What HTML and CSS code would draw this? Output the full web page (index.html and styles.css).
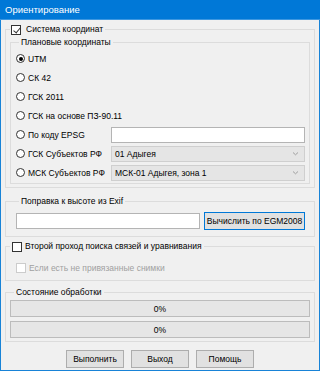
FILE: index.html
```html
<!DOCTYPE html>
<html lang="ru">
<head>
<meta charset="utf-8">
<link rel="stylesheet" href="styles.css">
</head>
<body>
<div class="window">
  <div class="titlebar">Ориентирование</div>
  <div class="content">
    <fieldset class="group g-coords">
      <legend class="legend"><span class="check checked"></span><span>Система координат</span></legend>
      <fieldset class="group g-plan">
        <legend class="legend">Плановые координаты</legend>
        <div class="radios">
          <div class="row"><span class="radio on"></span><span>UTM</span></div>
          <div class="row"><span class="radio"></span><span>СК 42</span></div>
          <div class="row"><span class="radio"></span><span>ГСК 2011</span></div>
          <div class="row"><span class="radio"></span><span>ГСК на основе ПЗ-90.11</span></div>
          <div class="row"><div class="lab"><span class="radio"></span><span>По коду EPSG</span></div><div class="input"></div></div>
          <div class="row"><div class="lab"><span class="radio"></span><span>ГСК Субъектов РФ</span></div><div class="combo"><span>01 Адыгея</span><svg width="7" height="5" viewBox="0 0 7 5"><path d="M1 1.5 L3.5 3.8 L6 1.5" fill="none" stroke="#a0a0a0" stroke-width="1"/></svg></div></div>
          <div class="row"><div class="lab"><span class="radio"></span><span>МСК Субъектов РФ</span></div><div class="combo"><span>МСК-01 Адыгея, зона 1</span><svg width="7" height="5" viewBox="0 0 7 5"><path d="M1 1.5 L3.5 3.8 L6 1.5" fill="none" stroke="#a0a0a0" stroke-width="1"/></svg></div></div>
        </div>
      </fieldset>
    </fieldset>

    <fieldset class="group g-exif">
      <legend class="legend">Поправка к высоте из Exif</legend>
      <div class="exif-row">
        <div class="input exif-input"></div>
        <div class="button default">Вычислить по EGM2008</div>
      </div>
    </fieldset>

    <fieldset class="group g-second">
      <legend class="legend"><span class="check"></span><span>Второй проход поиска связей и уравнивания</span></legend>
      <div class="row disabled"><span class="check dis"></span><span>Если есть не привязанные снимки</span></div>
    </fieldset>

    <fieldset class="group g-state">
      <legend class="legend">Состояние обработки</legend>
      <div class="progress">0%</div>
      <div class="progress">0%</div>
    </fieldset>

    <div class="buttons">
      <div class="button">Выполнить</div>
      <div class="button">Выход</div>
      <div class="button">Помощь</div>
    </div>
  </div>
</div>
</body>
</html>
```

FILE: styles.css
```css
* { box-sizing: border-box; }
html, body { margin: 0; padding: 0; }
body {
  font-family: "Liberation Sans", Arial, sans-serif;
  font-size: 8.5px;
  color: #000;
  background: #fff;
}
.window {
  width: 320px;
  height: 371px;
  border: 1px solid #1883d7;
  border-top: none;
  background: #f0f0f0;
  display: flex;
  flex-direction: column;
}
.titlebar {
  height: 20px;
  margin: 0 -1px;
  background: #0078d7;
  color: #fff;
  font-size: 9.5px;
  line-height: 20px;
  padding-left: 5px;
  border-bottom: 1px solid #3d97e0;
}
.content {
  padding: 4px 4px 0 4px;
  display: flex;
  flex-direction: column;
}
.group {
  margin: 0;
  border: 1px solid #dcdcdc;
  min-width: 0;
  padding: 0;
}
.legend {
  height: 11px;
  line-height: 11px;
  padding: 0 2px;
  margin-left: 0;
  display: flex;
  align-items: center;
  white-space: nowrap;
}
.g-coords { padding: 2px 4px 3px 4px; }
.g-coords > .legend { margin-left: 0; padding-left: 1px; }
.g-plan { padding: 1px 4px 1px 5px; }
.g-plan > .legend { margin-left: 3px; }

.radios { display: flex; flex-direction: column; }
.row {
  height: 19px;
  display: flex;
  align-items: center;
  white-space: nowrap;
}
.lab { flex: none; width: 95px; min-width: 0; display: flex; align-items: center; }
.radio {
  width: 9px; height: 9px;
  border: 1px solid #333;
  border-radius: 50%;
  background: #fff;
  margin: 0 3px 0 0;
  flex: none;
  position: relative;
}
.radio.on::after {
  content: "";
  position: absolute;
  left: 1.5px; top: 1.5px;
  width: 4px; height: 4px;
  border-radius: 50%;
  background: #000;
}
.check {
  width: 10px; height: 10px;
  border: 1px solid #333;
  background: #fff;
  margin-right: 5px;
  flex: none;
  position: relative;
}
.check.checked::after {
  content: "";
  position: absolute;
  left: 2.5px; top: 0px;
  width: 3px; height: 6px;
  border: solid #333;
  border-width: 0 1px 1px 0;
  transform: rotate(40deg);
}
.check.dis { border-color: #cccccc; }
.input {
  flex: 1;
  height: 16px;
  background: #fff;
  border: 1px solid #b4b4b4;
}
.combo {
  flex: 1;
  height: 16px;
  background: #e5e5e5;
  border: 1px solid #cfcfcf;
  display: flex;
  align-items: center;
  justify-content: space-between;
  padding: 0 5px 0 3px;
}
.g-exif { margin-top: 8px; padding: 5px 9px 6px 10px; }
.g-exif > .legend { margin-left: 3px; }
.exif-row { display: flex; align-items: center; gap: 4px; }
.exif-input { height: 16px; }
.button {
  height: 18px;
  background: #e1e1e1;
  border: 1px solid #adadad;
  display: flex;
  align-items: center;
  justify-content: center;
}
.button.default { border-color: #0078d7; width: 101px; flex: none; }
.g-second { margin-top: 4px; padding: 6px 4px 3px 4px; }
.g-second > .legend { margin-left: 0; }
.g-second .check { margin-right: 3px; }
.disabled { color: #a0a0a0; padding-left: 6px; }
.disabled .check { margin-right: 3px; }
.g-state { margin-top: 6px; padding: 2px 4px 3px 4px; }
.g-state > .legend { margin-left: 4px; }
.progress {
  height: 17px;
  background: #e6e6e6;
  border: 1px solid #bcbcbc;
  display: flex;
  align-items: center;
  justify-content: center;
  margin-top: 4px;
}
.progress:first-of-type { margin-top: 0; }
.buttons {
  display: flex;
  justify-content: center;
  gap: 7px;
  margin-top: 8px;
}
.buttons .button { width: 58px; }
```
